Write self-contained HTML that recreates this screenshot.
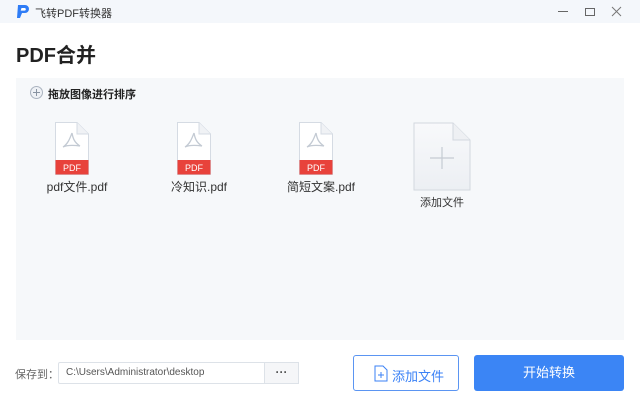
<!DOCTYPE html><html><head><meta charset="utf-8"><style>
*{margin:0;padding:0;box-sizing:border-box}
body{width:640px;height:406px;background:#fff;font-family:"Liberation Sans","Noto Sans CJK SC",sans-serif;position:relative;overflow:hidden;color:#333}
.abs{position:absolute}
.tb{left:0;top:0;width:640px;height:23px;background:#f4f7fb}
.panel{left:16px;top:78px;width:608px;height:262px;background:#f6f8fa}
.lbl{font-size:12px;color:#333;text-align:center;width:100px}
</style></head><body>
<div class="abs tb"></div>
<svg class="abs" style="left:16px;top:4px" width="14" height="15" viewBox="0 0 14 15"><path d="M2 1h7a4 4 0 0 1 0 8H6l-2 5H1z" fill="#2e7cf6"/><path d="M5.5 4h3a1.3 1.3 0 0 1 0 2.6H4.7z" fill="#fff"/></svg>
<div class="abs" style="left:35px;top:5px;font-size:11px;color:#333">飞转PDF转换器</div>
<div class="abs" style="left:558px;top:11px;width:10px;height:1px;background:#666"></div>
<div class="abs" style="left:585px;top:8px;width:10px;height:8px;border:1px solid #666"></div>
<svg class="abs" style="left:611px;top:6px" width="11" height="11"><path d="M1 1L10 10M10 1L1 10" stroke="#777" stroke-width="1"/></svg>
<div class="abs" style="left:16px;top:39px;font-size:20px;font-weight:bold;color:#222">PDF合并</div>
<div class="abs panel"></div>
<svg class="abs" style="left:30px;top:86px" width="13" height="13"><circle cx="6.5" cy="6.5" r="6" fill="#eef1f5" stroke="#aab3bf"/><path d="M6.5 3v7M3 6.5h7" stroke="#8893a1"/></svg>
<div class="abs" style="left:48px;top:86px;font-size:11px;font-weight:bold;color:#222">拖放图像进行排序</div>

<svg class="abs" style="left:55px;top:122px" width="34" height="53"><path d="M0.5 0.5H22L33.5 12V52.5H0.5Z" fill="#fff" stroke="#d5dbe3"/><path d="M22 0.5V12H33.5" fill="#f0f2f5" stroke="#d5dbe3"/><path d="M17 11c-2 5-4 11-9 14M17 11c1 6 3 10 8 13M8 25c4-2 10-2 17-1" fill="none" stroke="#c3cad3" stroke-width="1.3"/><rect x="0.5" y="38" width="33" height="14.5" fill="#e8423b"/><text x="17" y="49" font-size="9" fill="#fff" text-anchor="middle" font-family="Liberation Sans">PDF</text></svg>
<svg class="abs" style="left:177px;top:122px" width="34" height="53"><path d="M0.5 0.5H22L33.5 12V52.5H0.5Z" fill="#fff" stroke="#d5dbe3"/><path d="M22 0.5V12H33.5" fill="#f0f2f5" stroke="#d5dbe3"/><path d="M17 11c-2 5-4 11-9 14M17 11c1 6 3 10 8 13M8 25c4-2 10-2 17-1" fill="none" stroke="#c3cad3" stroke-width="1.3"/><rect x="0.5" y="38" width="33" height="14.5" fill="#e8423b"/><text x="17" y="49" font-size="9" fill="#fff" text-anchor="middle" font-family="Liberation Sans">PDF</text></svg>
<svg class="abs" style="left:299px;top:122px" width="34" height="53"><path d="M0.5 0.5H22L33.5 12V52.5H0.5Z" fill="#fff" stroke="#d5dbe3"/><path d="M22 0.5V12H33.5" fill="#f0f2f5" stroke="#d5dbe3"/><path d="M17 11c-2 5-4 11-9 14M17 11c1 6 3 10 8 13M8 25c4-2 10-2 17-1" fill="none" stroke="#c3cad3" stroke-width="1.3"/><rect x="0.5" y="38" width="33" height="14.5" fill="#e8423b"/><text x="17" y="49" font-size="9" fill="#fff" text-anchor="middle" font-family="Liberation Sans">PDF</text></svg>
<div class="abs lbl" style="left:27px;top:178px">pdf文件.pdf</div>
<div class="abs lbl" style="left:149px;top:178px">冷知识.pdf</div>
<div class="abs lbl" style="left:271px;top:178px">简短文案.pdf</div>

<svg class="abs" style="left:413px;top:122px" width="58" height="69"><defs><linearGradient id="g" x1="0" y1="0" x2="0" y2="1"><stop offset="0" stop-color="#f8f9fb"/><stop offset="1" stop-color="#eceff3"/></linearGradient></defs><path d="M1 1H40L57 18V68H1Z" fill="url(#g)" stroke="#d3d8df"/><path d="M40 1V18H57" fill="#eef0f3" stroke="#d3d8df"/><path d="M29 25v22M17 36h24" stroke="#c5cbd3" stroke-width="1.2"/></svg>
<div class="abs lbl" style="left:392px;top:194px;font-size:11px">添加文件</div>

<div class="abs" style="left:15px;top:366px;font-size:11px;color:#666">保存到：</div>
<div class="abs" style="left:58px;top:362px;width:241px;height:22px;border:1px solid #dde2e8;background:#fff;border-radius:2px"></div>
<div class="abs" style="left:66px;top:367px;font-size:10px;color:#555">C:\Users\Administrator\desktop</div>
<div class="abs" style="left:264px;top:362px;width:35px;height:22px;border:1px solid #dde2e8;background:#f5f6f8;font-size:12px;text-align:center;line-height:18px;color:#555;font-weight:bold">···</div>
<div class="abs" style="left:353px;top:355px;width:106px;height:36px;border:1px solid #5b95f2;border-radius:3px;background:#fff"></div>
<svg class="abs" style="left:374px;top:365px" width="14" height="17"><path d="M1 1H9L13 5V16H1Z" fill="#fff" stroke="#3b82f6"/><path d="M7 7v6M4 10h6" stroke="#3b82f6"/></svg>
<div class="abs" style="left:392px;top:366px;font-size:13px;color:#3b82f6">添加文件</div>
<div class="abs" style="left:474px;top:355px;width:150px;height:36px;background:#3b85f5;border-radius:3px;color:#fff;font-size:13px;text-align:center;line-height:36px">开始转换</div>
</body></html>
